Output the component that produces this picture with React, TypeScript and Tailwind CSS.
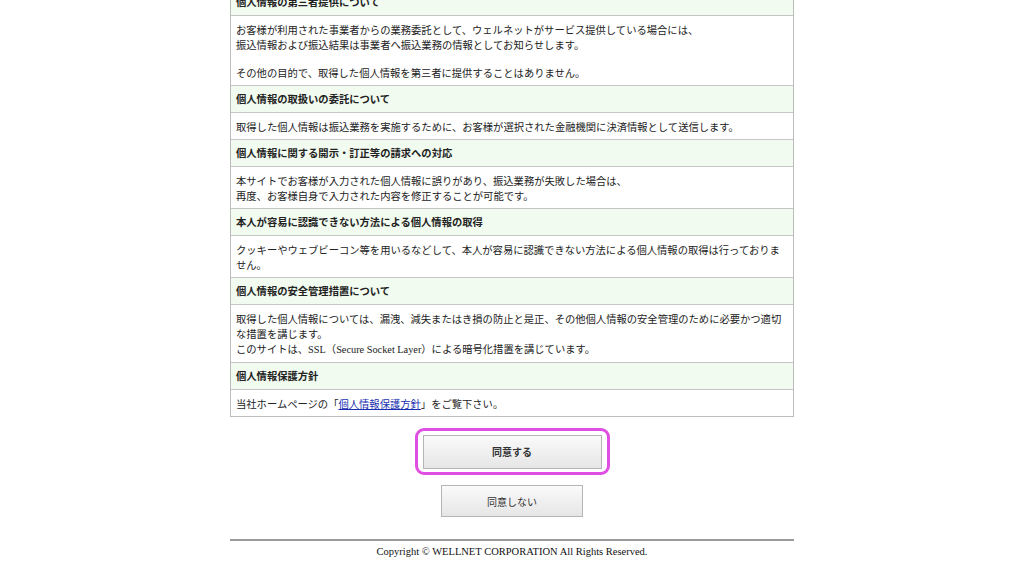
import React from 'react';

const jp = { fontFamily: '"Noto Sans CJK JP", sans-serif' };
const serif = { fontFamily: '"Liberation Serif", serif' };

type Section = { title: string; body: React.ReactNode };

const sections: Section[] = [
  {
    title: '個人情報の第三者提供について',
    body: (
      <>
        <p>
          お客様が利用された事業者からの業務委託として、ウェルネットがサービス提供している場合には、
          <br />
          振込情報および振込結果は事業者へ振込業務の情報としてお知らせします。
        </p>
        <p className="mt-[13px]">その他の目的で、取得した個人情報を第三者に提供することはありません。</p>
      </>
    ),
  },
  {
    title: '個人情報の取扱いの委託について',
    body: <p>取得した個人情報は振込業務を実施するために、お客様が選択された金融機関に決済情報として送信します。</p>,
  },
  {
    title: '個人情報に関する開示・訂正等の請求への対応',
    body: (
      <p>
        本サイトでお客様が入力された個人情報に誤りがあり、振込業務が失敗した場合は、
        <br />
        再度、お客様自身で入力された内容を修正することが可能です。
      </p>
    ),
  },
  {
    title: '本人が容易に認識できない方法による個人情報の取得',
    body: <p>クッキーやウェブビーコン等を用いるなどして、本人が容易に認識できない方法による個人情報の取得は行っておりません。</p>,
  },
  {
    title: '個人情報の安全管理措置について',
    body: (
      <p>
        取得した個人情報については、漏洩、減失またはき損の防止と是正、その他個人情報の安全管理のために必要かつ適切な措置を講じます。
        <br />
        このサイトは、<span style={serif}>SSL</span>（<span style={serif}>Secure Socket Layer</span>）による暗号化措置を講じています。
      </p>
    ),
  },
  {
    title: '個人情報保護方針',
    body: (
      <p>
        当社ホームページの「
        <a href="#" className="text-[#1a2fb0] underline">
          個人情報保護方針
        </a>
        」をご覧下さい。
      </p>
    ),
  },
];

export default function App() {
  return (
    <div className="min-h-[566px] bg-white text-[#222]" style={jp}>
      <div className="w-[564px] mx-auto -mt-[11px]">
        {/* Policy table */}
        <div className="border-x border-b border-[#bdbdbd]">
          {sections.map((s, i) => (
            <div key={i}>
              <div className="bg-[#f1fbef] px-[5px] py-[6px] text-[10.3px] leading-[14px] font-bold border-b border-[#c6c6c6]">
                {s.title}
              </div>
              <div className={`px-[5px] py-[5.5px] text-[10.3px] leading-[15px] ${i < sections.length - 1 ? 'border-b border-[#c6c6c6]' : ''}`}>
                {s.body}
              </div>
            </div>
          ))}
        </div>

        {/* Buttons */}
        <div className="flex flex-col items-center mt-[11px]">
          <div className="border-[3px] border-[#e04fe3] rounded-[9px] px-[5px] py-[3.5px]">
            <button className="w-[179px] h-[34px] border border-[#b5b5b5] bg-gradient-to-b from-[#fafafa] to-[#e6e6e6] text-[10px] font-bold text-[#333]">
              同意する
            </button>
          </div>
          <button className="mt-[10px] w-[142px] h-[32px] border border-[#b5b5b5] bg-gradient-to-b from-[#fafafa] to-[#e6e6e6] text-[10px] text-[#333]">
            同意しない
          </button>
        </div>

        {/* Footer */}
        <div className="mt-[22px] border-t-2 border-[#9a9a9a] pt-[4px] text-center text-[10.5px] leading-[14px] text-[#111]" style={serif}>
          Copyright © WELLNET CORPORATION All Rights Reserved.
        </div>
      </div>
    </div>
  );
}
